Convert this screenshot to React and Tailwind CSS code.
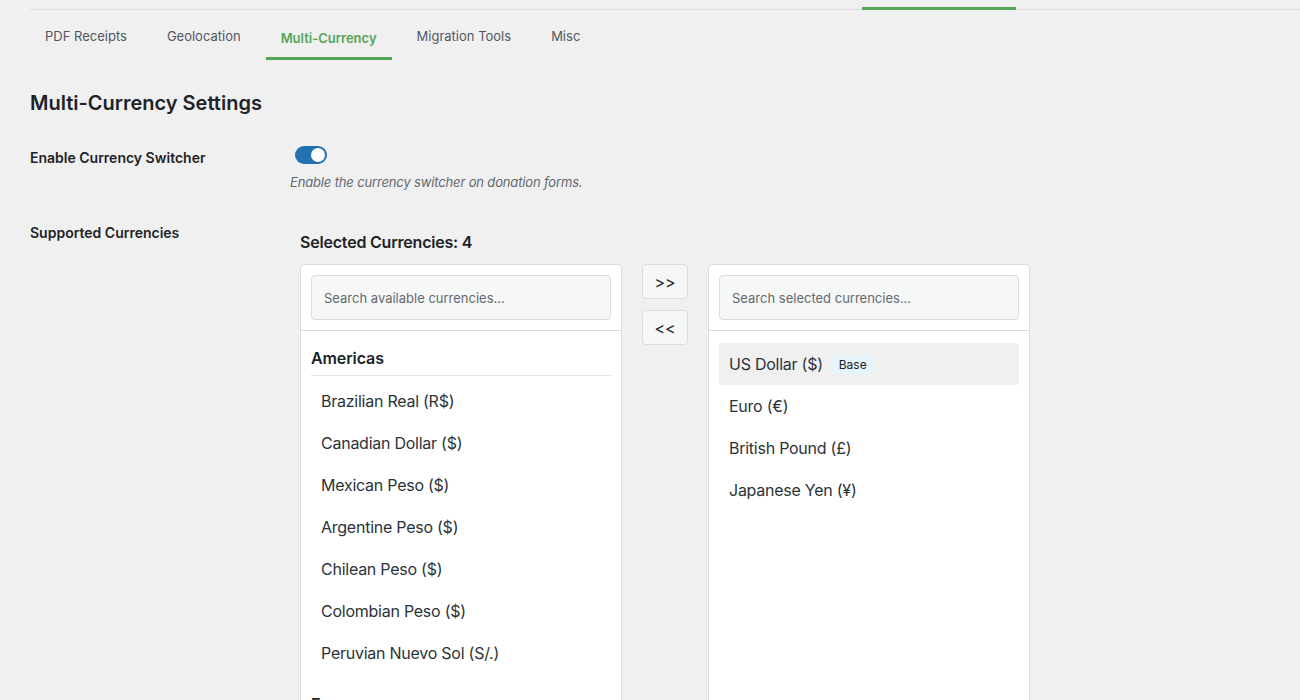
const TABS = ['PDF Receipts', 'Geolocation', 'Multi-Currency', 'Migration Tools', 'Misc'];

const GROUPS = [
  {
    name: 'Americas',
    items: [
      'Brazilian Real (R$)',
      'Canadian Dollar ($)',
      'Mexican Peso ($)',
      'Argentine Peso ($)',
      'Chilean Peso ($)',
      'Colombian Peso ($)',
      'Peruvian Nuevo Sol (S/.)',
    ],
  },
  {
    name: 'Europe',
    items: ['Swiss Franc (CHF)', 'Swedish Krona (kr)', 'Norwegian Krone (kr)'],
  },
];

const SELECTED = [
  { label: 'US Dollar ($)', base: true },
  { label: 'Euro (€)' },
  { label: 'British Pound (£)' },
  { label: 'Japanese Yen (¥)' },
];

function SearchBox({ placeholder }) {
  return (
    <div className="border-b border-[#dcdcde] p-[10px]">
      <input
        type="text"
        placeholder={placeholder}
        className="h-[45px] w-full rounded-[4px] border border-[#dcdcde] bg-[#f6f7f7] px-[12px] text-[13px] text-[#2c3338] placeholder:text-[#646970] outline-none"
      />
    </div>
  );
}

function AvailablePanel() {
  return (
    <div className="flex h-[460px] w-[322px] flex-col overflow-hidden rounded-[4px] border border-[#dcdcde] bg-white">
      <SearchBox placeholder="Search available currencies..." />
      <div className="px-[10px] pt-[10px]">
        {GROUPS.map((group, i) => (
          <div key={group.name} className={i > 0 ? 'mt-[13px]' : ''}>
            <h4 className="border-b border-[#e2e4e7] pt-[5px] pb-[5px] text-[16px] leading-[24px] font-semibold tracking-[-0.1px] text-[#1d2327]">
              {group.name}
            </h4>
            <ul className="mt-[4px]">
              {group.items.map((item) => (
                <li
                  key={item}
                  className="px-[10px] py-[10px] text-[16px] leading-[22px] tracking-[-0.25px] text-[#2c3338]"
                >
                  {item}
                </li>
              ))}
            </ul>
          </div>
        ))}
      </div>
    </div>
  );
}

function SelectedPanel() {
  return (
    <div className="flex h-[460px] w-[322px] flex-col overflow-hidden rounded-[4px] border border-[#dcdcde] bg-white">
      <SearchBox placeholder="Search selected currencies..." />
      <ul className="px-[10px] pt-[12px]">
        {SELECTED.map((c) => (
          <li
            key={c.label}
            className={
              'flex items-center rounded-[3px] px-[10px] py-[10px] text-[16px] leading-[22px] tracking-[-0.25px] text-[#2c3338] ' +
              (c.base ? 'bg-[#f0f0f1]' : '')
            }
          >
            {c.label}
            {c.base && (
              <span className="ml-[9px] rounded-[3px] bg-[#e5f5fa] px-[7px] text-[12px] leading-[19px] tracking-normal text-[#1d2327]">
                Base
              </span>
            )}
          </li>
        ))}
      </ul>
    </div>
  );
}

function MoveButton({ children }) {
  return (
    <button
      type="button"
      className="flex h-[35px] w-[46px] items-center justify-center rounded-[4px] border border-[#dcdcde] bg-[#f6f7f7] text-[16px] text-[#1d2327]"
    >
      {children}
    </button>
  );
}

export default function App() {
  return (
    <div className="h-[700px] overflow-hidden bg-[#f0f0f1] font-['Inter','Liberation_Sans',sans-serif] text-[#1d2327]">
      <div className="pl-[30px]">
        <div className="relative h-[10px] border-b border-[#dcdcde]">
          <div className="absolute bottom-[-1px] left-[832px] h-[3px] w-[154px] bg-[#55a556]" />
        </div>

        <nav className="flex gap-[10px]">
          {TABS.map((tab) =>
            tab === 'Multi-Currency' ? (
              <button
                key={tab}
                type="button"
                className="border-b-[3px] border-[#55a556] px-[15px] pt-[18px] pb-[9px] text-[13px] leading-[20px] font-semibold text-[#55a556]"
              >
                {tab}
              </button>
            ) : (
              <button
                key={tab}
                type="button"
                className="px-[15px] pt-[16px] pb-[14px] text-[13px] leading-[20px] font-normal text-[#50575e]"
              >
                {tab}
              </button>
            )
          )}
        </nav>

        <h2 className="mt-[29px] text-[20px] leading-[28px] font-semibold text-[#1d2327]">
          Multi-Currency Settings
        </h2>

        <div className="mt-[31px] flex">
          <div className="w-[260px] text-[14px] leading-[20px] font-semibold">Enable Currency Switcher</div>
          <div>
            <div className="ml-[5px] mt-[-2px] flex h-[18px] w-[32px] items-center justify-end rounded-full bg-[#2271b1] pr-[2px]">
              <span className="h-[14px] w-[14px] rounded-full bg-white" />
            </div>
            <p className="mt-[8px] text-[13px] leading-[20px] italic tracking-[-0.15px] text-[#646970]">
              Enable the currency switcher on donation forms.
            </p>
          </div>
        </div>

        <div className="mt-[31px] flex">
          <div className="w-[260px] text-[14px] leading-[20px] font-semibold">Supported Currencies</div>
          <div className="ml-[10px] mt-[8px]">
            <h3 className="text-[16px] leading-[22px] font-semibold tracking-[-0.2px] text-[#1d2327]">
              Selected Currencies: 4
            </h3>
            <div className="mt-[11px] flex items-start gap-[20px]">
              <AvailablePanel />
              <div className="flex flex-col gap-[11px]">
                <MoveButton>&gt;&gt;</MoveButton>
                <MoveButton>&lt;&lt;</MoveButton>
              </div>
              <SelectedPanel />
            </div>
          </div>
        </div>
      </div>
    </div>
  );
}
